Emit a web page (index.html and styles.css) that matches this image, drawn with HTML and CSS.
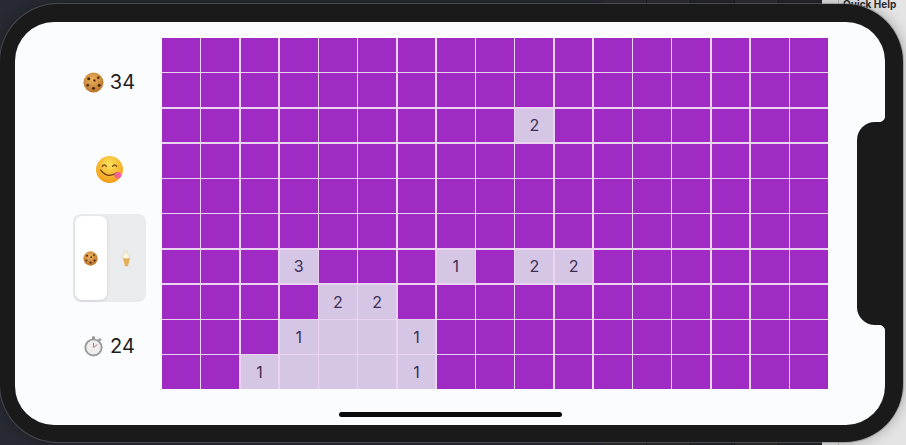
FILE: index.html
```html
<!DOCTYPE html>
<html lang="en">
<head>
  <meta charset="UTF-8" />
  <title>Minesweeper</title>
  <link rel="stylesheet" href="styles.css">
</head>
<body>
  <div class="backdrop">
    <div class="toolbar">
      <div class="tool"></div>
      <div class="tool"></div>
      <div class="tool dim"></div>
      <div class="tool"></div>
      <div class="tool dim"></div>
    </div>
    <div class="inspector">Quick Help</div>
  </div>

  <div class="phone">
    <div class="screen">
      <div class="sidebar">
        <div class="stat">
          <svg class="emoji" viewBox="0 0 22 22"><use href="#cookie"/></svg>
          <span>34</span>
        </div>
        <svg class="face" viewBox="0 0 26 26">
          <defs>
            <radialGradient id="faceFill" cx="50%" cy="30%" r="70%">
              <stop offset="0" stop-color="#fde25a"/>
              <stop offset="1" stop-color="#f29a16"/>
            </radialGradient>
          </defs>
          <circle cx="13" cy="13" r="13" fill="url(#faceFill)"/>
          <path d="M6 10q2-3 4 0M16 10q2-3 4 0" fill="none" stroke="#6b3a10" stroke-width="1.2" stroke-linecap="round"/>
          <path d="M4.5 13.5q7 9 16 2.5" fill="none" stroke="#6b3a10" stroke-width="1.2" stroke-linecap="round"/>
          <ellipse cx="21" cy="18.5" rx="3.2" ry="3.2" fill="#f2609a"/>
        </svg>
        <div class="picker">
          <div class="segment selected">
            <svg class="emoji-small" viewBox="0 0 22 22"><use href="#cookie"/></svg>
          </div>
          <div class="segment">
            <svg class="emoji-cone" viewBox="0 0 12 18">
              <path d="M2 8h8l-2.4 9.5H4.400z" fill="#e3ae55"/>
              <path d="M1.2 8.4q-.6-2.4 1.6-3.2 0-3 3-4.700 1 1.500 1 3 3.200 1.400 3 4.900q-4.400 1.200-8.600 0z" fill="#fbf6e2" stroke="#d8c896" stroke-width="0.6"/>
            </svg>
          </div>
        </div>
        <div class="stat">
          <svg class="emoji" viewBox="0 0 22 22">
            <rect x="9.5" y="0.5" width="3" height="3" fill="#8f8f8f"/>
            <rect x="16" y="2.5" width="3" height="3" fill="#a5a5a5" transform="rotate(45 17.5 4)"/>
            <circle cx="11" cy="12" r="9.500" fill="#9c9c9c"/>
            <circle cx="11" cy="12" r="7.500" fill="#efeded"/>
            <path d="M11 12l4-3M11 12V7" stroke="#b9655f" stroke-width="0.9"/>
          </svg>
          <span>24</span>
        </div>
      </div>

      <div class="board" id="board"></div>
    </div>
    <div class="notch"></div>
    <div class="home-bar"></div>
  </div>

  <svg class="sprites" width="0" height="0">
    <defs>
      <radialGradient id="cookieFill" cx="45%" cy="35%" r="70%">
        <stop offset="0" stop-color="#eab35f"/>
        <stop offset="1" stop-color="#b96f26"/>
      </radialGradient>
      <g id="cookie">
        <circle cx="11" cy="11" r="10.500" fill="url(#cookieFill)"/>
        <circle cx="6" cy="7" r="1.600" fill="#4e2a13"/>
        <circle cx="12" cy="9" r="1.300" fill="#5e3517"/>
        <circle cx="16" cy="6" r="1.300" fill="#4e2a13"/>
        <circle cx="5" cy="14" r="1.400" fill="#4e2a13"/>
        <circle cx="11" cy="17" r="1.600" fill="#4e2a13"/>
        <circle cx="17" cy="14" r="1.600" fill="#4e2a13"/>
      </g>
    </defs>
  </svg>

  <script src="board.js"></script>
</body>
</html>
```

FILE: board.js
```js
const COLS = 17;
const ROWS = 10;

// row,col -> number shown. empty string = opened with no number
const opened = {
  "2,9": "2",
  "6,3": "3",
  "6,7": "1",
  "6,9": "2",
  "6,10": "2",
  "7,4": "2",
  "7,5": "2",
  "8,3": "1",
  "8,4": "",
  "8,5": "",
  "8,6": "1",
  "9,2": "1",
  "9,3": "",
  "9,4": "",
  "9,5": "",
  "9,6": "1"
};

const board = document.getElementById("board");

for (let r = 0; r < ROWS; r++) {
  for (let c = 0; c < COLS; c++) {
    const cell = document.createElement("div");
    const key = r + "," + c;
    cell.className = "cell";
    if (key in opened) {
      cell.className = "cell open";
      cell.textContent = opened[key];
    }
    board.appendChild(cell);
  }
}
```

FILE: styles.css
```css
* {
  box-sizing: border-box;
}

html,
body {
  height: 100%;
}

body {
  margin: 0;
  overflow: hidden;
  background: #272a32;
  font-family: Inter, "Liberation Sans", sans-serif;
  padding: 4px 3px 3px 0;
}

.backdrop {
  position: absolute;
  inset: 0;
}

.toolbar {
  position: absolute;
  top: 0;
  right: 84px;
  display: flex;
  gap: 1px;
  width: 219px;
  height: 445px;
  background: #1c1c1e;
}

.tool {
  flex: 1;
  background: #2e2e30;
}

.tool.dim {
  background: #26272c;
}

.inspector {
  position: absolute;
  top: 0;
  right: 0;
  width: 84px;
  height: 445px;
  padding-left: 21px;
  background: linear-gradient(to right, #e4e4e4 16px, #bdbdbd 16px, #bdbdbd 17px, #e4e4e4 17px);
  font-size: 10px;
  font-weight: 700;
  line-height: 8px;
  color: #2b2b2b;
}

.phone {
  position: relative;
  height: 438px;
  padding: 18px 18px 17px 15px;
  background: #1a1a1a;
  border-radius: 58px;
  box-shadow: 0 0 0 1px rgba(120, 122, 130, 0.45), 0 0 14px rgba(0, 0, 0, 0.3);
}

.screen {
  display: flex;
  height: 403px;
  padding: 16px 57px 36px 0;
  background: #fbfcfe;
  border-radius: 39px;
}

.sidebar {
  display: flex;
  flex-direction: column;
  align-items: center;
  flex: none;
  width: 147px;
  padding-left: 42px;
  padding-right: 1px;
}

.stat {
  display: flex;
  align-items: center;
  justify-content: center;
  gap: 6px;
  height: 20px;
  margin-top: 34px;
  font-size: 20px;
  color: #1e1e22;
}

.emoji {
  width: 21px;
  height: 21px;
}

.face {
  width: 27px;
  height: 27px;
  margin-top: 64px;
}

.picker {
  display: flex;
  flex: none;
  width: 73px;
  height: 88px;
  margin-top: 31px;
  padding: 2px;
  background: #eaebed;
  border-radius: 8px;
}

.segment {
  display: flex;
  flex: 1;
  align-items: center;
  justify-content: center;
}

.segment.selected {
  flex: none;
  width: 32px;
  background: #fff;
  border-radius: 7px;
  box-shadow: 0 1px 3px rgba(0, 0, 0, 0.12);
}

.emoji-small {
  width: 15px;
  height: 15px;
}

.emoji-cone {
  width: 11px;
  height: 17px;
  margin-left: 2px;
}

.picker + .stat {
  margin-top: 34px;
}

.board {
  display: grid;
  flex: none;
  grid-template-columns: repeat(17, 1fr);
  grid-template-rows: repeat(10, 1fr);
  gap: 1.5px;
  width: 666px;
  height: 351px;
  background: #ead4f2;
}

.cell {
  display: flex;
  align-items: center;
  justify-content: center;
  background: #a02bc4;
  font-size: 16px;
  color: #3b2f55;
}

.cell.open {
  background: #d6c6e6;
}

.notch {
  position: absolute;
  top: 118px;
  right: 18px;
  width: 28px;
  height: 203px;
  background: #1a1a1a;
  border-radius: 18px 0 0 18px;
}

/* little inverse corners where the notch meets the screen edge */
.notch::before,
.notch::after {
  content: "";
  position: absolute;
  right: 0;
  width: 5px;
  height: 5px;
}

.notch::before {
  top: -5px;
  background: radial-gradient(circle at 0 0, transparent 4.5px, #1a1a1a 5px);
}

.notch::after {
  bottom: -5px;
  background: radial-gradient(circle at 0 100%, transparent 4.5px, #1a1a1a 5px);
}

.home-bar {
  position: absolute;
  left: 339px;
  top: 408px;
  width: 223px;
  height: 5px;
  background: #0a0a0a;
  border-radius: 3px;
}

.sprites {
  position: absolute;
}
```
